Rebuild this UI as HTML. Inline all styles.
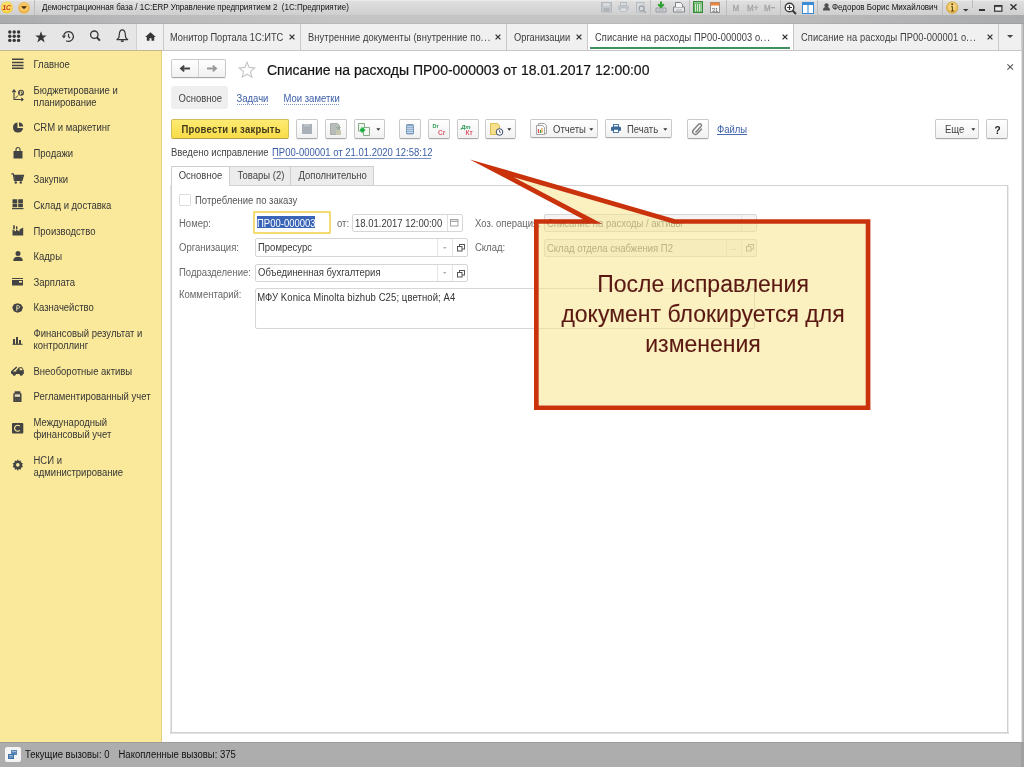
<!DOCTYPE html>
<html><head><meta charset="utf-8">
<style>
*{box-sizing:border-box;margin:0;padding:0}
html,body{width:1024px;height:767px;overflow:hidden;background:#fff;font-family:"Liberation Sans",sans-serif;color:#333}
.a{position:absolute}
svg.a{overflow:visible}
.t{position:absolute;white-space:nowrap;font-family:"Liberation Sans",sans-serif}
</style></head><body><div style="position:absolute;left:0;top:0;width:1024px;height:767px;will-change:transform">
<div class="a" style="left:0px;top:0px;width:1024px;height:15px;background:linear-gradient(to bottom,#f2f2f2 0,#dfdfe0 1px,#cfcfd0 15px)"></div>
<div class="a" style="left:0px;top:15px;width:1024px;height:9px;background:linear-gradient(to right,#aaabad 0,#b8b8ba 12%,#c4c4c4 32%,#c4c4c4 62%,#b9b9ba 80%,#a9aaac 100%)"></div>
<div class="a" style="left:0px;top:23px;width:1024px;height:1px;background:rgba(0,0,0,0.06)"></div>
<svg class="a" style="left:0px;top:1px;" width="14" height="14" viewBox="0 0 14 14"><circle cx="6.9" cy="6.5" r="5.9" fill="#f4cf3c"/><circle cx="6.9" cy="5.8" r="4.6" fill="#fbe36a"/><text x="6.6" y="9" font-size="6.5" font-weight="bold" font-style="italic" text-anchor="middle" fill="#d42a1a" font-family="Liberation Sans">1С</text></svg>
<svg class="a" style="left:18px;top:1px;" width="13" height="14" viewBox="0 0 13 14"><circle cx="6" cy="6.8" r="5.8" fill="#f2b040"/><circle cx="6" cy="6" r="4.6" fill="#f8c868"/><path d="M3 5.3h6l-3 3z" fill="#4a2a08"/></svg>
<div class="a" style="left:34px;top:0px;width:1px;height:15px;background:#bcbcbc"></div>
<div class="t" style="left:42px;top:3px;font-size:8px;line-height:10px;color:#111;transform:scaleY(1.22);transform-origin:0 7px;">Демонстрационная база / 1С:ERP Управление предприятием 2&nbsp;&nbsp;(1С:Предприятие)</div>
<svg class="a" style="left:601px;top:2px;" width="11" height="10" viewBox="0 0 11 10"><rect x="0.5" y="0.5" width="10" height="9.5" fill="#c4c8cc" stroke="#b4b8bc"/><rect x="2.5" y="1" width="6" height="3" fill="#d8dce0"/><rect x="2.5" y="6" width="6" height="3.5" fill="#b0b4b8"/></svg>
<svg class="a" style="left:618px;top:2px;" width="11" height="10" viewBox="0 0 11 10"><rect x="2.5" y="0.5" width="6" height="3" fill="#d8dcdf" stroke="#b8bcc0" stroke-width="1"/><rect x="0" y="3.5" width="11" height="4.5" rx="1" fill="#c0c4c8"/><rect x="2.5" y="6" width="6" height="3.5" fill="#dde0e3" stroke="#b8bcc0" stroke-width=".8"/></svg>
<svg class="a" style="left:636px;top:2px;" width="11" height="11" viewBox="0 0 11 11"><rect x="0.5" y="0.5" width="7.5" height="9.5" fill="#d8dcdf" stroke="#b8bcc0"/><circle cx="5.5" cy="6.5" r="2.5" fill="none" stroke="#a0a6ac" stroke-width="1.3"/><path d="M7.3 8.3l2.5 2.5" stroke="#a0a6ac" stroke-width="1.5"/></svg>
<div class="a" style="left:650px;top:0px;width:1px;height:15px;background:#c0c0c0"></div>
<svg class="a" style="left:655px;top:1px;" width="12" height="12" viewBox="0 0 12 12"><path d="M1 7h10v4H1z" fill="#d0d3d8" stroke="#8a8e96" stroke-width=".8"/><path d="M3 9h6" stroke="#8a8e96" stroke-width=".6"/><path d="M6 0.5v5M3.2 3.2L6 6l2.8-2.8" stroke="#30a030" stroke-width="2" fill="none"/></svg>
<svg class="a" style="left:673px;top:2px;" width="12" height="11" viewBox="0 0 12 11"><path d="M0.5 5h11v5H0.5z" fill="#e8eaec" stroke="#80848a" stroke-width="1"/><path d="M2.5 5V0.5h5l2 2V5" fill="#f4f4f4" stroke="#80848a" stroke-width="1"/><path d="M3 8h6" stroke="#80848a" stroke-width=".6"/></svg>
<div class="a" style="left:689px;top:0px;width:1px;height:15px;background:#c0c0c0"></div>
<svg class="a" style="left:693px;top:1px;" width="10" height="12" viewBox="0 0 10 12"><rect x="0.5" y="0.5" width="9" height="11" fill="#5aae5a" stroke="#3a8a3a"/><path d="M2.5 3v7.5M4.5 3v7.5M6.5 3v7.5M8 3v7.5" stroke="#e0f0e0" stroke-width=".9"/><rect x="1" y="1" width="8" height="1.5" fill="#8ac88a"/></svg>
<svg class="a" style="left:710px;top:1px;" width="10" height="12" viewBox="0 0 10 12"><rect x="0.5" y="1.5" width="9" height="10" fill="#f6f6f6" stroke="#909090"/><rect x="0.5" y="1.5" width="9" height="3" fill="#e8843c"/><text x="5" y="10.5" font-size="6" text-anchor="middle" fill="#505050" font-family="Liberation Sans">31</text></svg>
<div class="a" style="left:726px;top:0px;width:1px;height:15px;background:#bdbdbd"></div>
<div class="t" style="left:732.5px;top:4px;font-size:8px;line-height:10px;color:#a4a4a4;transform:scaleY(1.22);transform-origin:0 7px;-webkit-text-stroke:0.3px #a4a4a4;">M</div>
<div class="t" style="left:747px;top:4px;font-size:8px;line-height:10px;color:#a4a4a4;transform:scaleY(1.22);transform-origin:0 7px;-webkit-text-stroke:0.3px #a4a4a4;">M+</div>
<div class="t" style="left:764px;top:4px;font-size:8px;line-height:10px;color:#a4a4a4;transform:scaleY(1.22);transform-origin:0 7px;-webkit-text-stroke:0.3px #a4a4a4;">M−</div>
<div class="a" style="left:780px;top:0px;width:1px;height:15px;background:#bdbdbd"></div>
<svg class="a" style="left:784px;top:2px;" width="13" height="13" viewBox="0 0 13 13"><circle cx="5.5" cy="5.5" r="4.3" fill="#fff" stroke="#3a3a3a" stroke-width="1.4"/><path d="M3 5.5h5M5.5 3v5" stroke="#3a3a3a" stroke-width="1.2"/><path d="M8.5 8.5l3.5 3.5" stroke="#3a3a3a" stroke-width="2"/></svg>
<svg class="a" style="left:802px;top:2px;" width="12" height="12" viewBox="0 0 12 12"><rect x="0.5" y="0.5" width="11" height="11" fill="#fff" stroke="#3a8ad8"/><rect x="0.5" y="0.5" width="11" height="2.5" fill="#3a8ad8"/><path d="M6 3v8.5" stroke="#3a8ad8"/></svg>
<div class="a" style="left:817px;top:0px;width:1px;height:15px;background:#bdbdbd"></div>
<svg class="a" style="left:823px;top:3px;" width="7" height="8" viewBox="0 0 7 8"><circle cx="3.5" cy="2.3" r="2.1" fill="#505050"/><path d="M0 7.5c0-3 1.4-3.6 3.5-3.6s3.5 .6 3.5 3.6z" fill="#505050"/></svg>
<div class="t" style="left:832px;top:3px;font-size:8px;line-height:10px;color:#111;transform:scaleY(1.22);transform-origin:0 7px;">Федоров Борис Михайлович</div>
<div class="a" style="left:942px;top:0px;width:1px;height:15px;background:#bdbdbd"></div>
<svg class="a" style="left:946px;top:1px;" width="13" height="13" viewBox="0 0 13 13"><circle cx="6.2" cy="6.6" r="5.8" fill="#e6b850" stroke="#d0a040" stroke-width=".6"/><circle cx="6.2" cy="5.8" r="4.3" fill="#f2d27a"/><circle cx="6.2" cy="3.3" r="1" fill="#5a4010"/><path d="M5.2 5.3h1.7v4.2h1v.9H5v-.9h.9V6.2h-.7z" fill="#5a4010"/></svg>
<svg class="a" style="left:963px;top:8.5px;" width="6" height="3" viewBox="0 0 6 3"><path d="M0 0h5.5l-2.75 2.6z" fill="#333"/></svg>
<div class="a" style="left:972px;top:0px;width:1px;height:8px;background:#bdbdbd"></div>
<div class="a" style="left:979px;top:9px;width:5.5px;height:1.6px;background:#333"></div>
<svg class="a" style="left:994px;top:4.5px;" width="9" height="7" viewBox="0 0 9 7"><rect x="0.6" y="0.6" width="7.3" height="5.6" fill="#eee" stroke="#333" stroke-width="1.2"/><path d="M1 1.6h6.6" stroke="#333" stroke-width=".9"/></svg>
<svg class="a" style="left:1010.3px;top:4px;" width="7" height="6" viewBox="0 0 7 6"><path d="M0.5 0.3l6 5.4M6.5 0.3l-6 5.4" stroke="#333" stroke-width="1.5"/></svg>
<div class="a" style="left:0px;top:24px;width:137px;height:27px;background:#e6e6e6"></div>
<div class="a" style="left:137px;top:24px;width:887px;height:27px;background:#f0f0f0"></div>
<div class="a" style="left:0px;top:50px;width:1024px;height:1px;background:#c6c6c6"></div>
<div class="a" style="left:0px;top:50px;width:162px;height:1px;background:#c4b98c"></div>
<div class="a" style="left:136px;top:24px;width:1px;height:26px;background:#d0d0d0"></div>
<div class="a" style="left:163px;top:24px;width:1px;height:26px;background:#c8c8c8"></div>
<svg class="a" style="left:8px;top:30px;" width="13" height="13" viewBox="0 0 13 13"><circle cx="1.80" cy="2.00" r="1.7" fill="#363636"/><circle cx="6.20" cy="2.00" r="1.7" fill="#363636"/><circle cx="10.60" cy="2.00" r="1.7" fill="#363636"/><circle cx="1.80" cy="6.20" r="1.7" fill="#363636"/><circle cx="6.20" cy="6.20" r="1.7" fill="#363636"/><circle cx="10.60" cy="6.20" r="1.7" fill="#363636"/><circle cx="1.80" cy="10.40" r="1.7" fill="#363636"/><circle cx="6.20" cy="10.40" r="1.7" fill="#363636"/><circle cx="10.60" cy="10.40" r="1.7" fill="#363636"/></svg>
<svg class="a" style="left:35px;top:31px;" width="12" height="12" viewBox="0 0 12 12"><path d="M6 0.3l1.5 4.1h4.3l-3.5 2.6 1.4 4.5L6 8.8 2.3 11.5l1.4-4.5L0.2 4.4h4.3z" fill="#363636"/></svg>
<svg class="a" style="left:61px;top:30px;" width="14" height="13" viewBox="0 0 14 13"><path d="M2.77 5.23A4.9 4.9 0 1 1 5.05 10.74" fill="none" stroke="#363636" stroke-width="1.3"/><path d="M0.8 5.6h4.2L2.9 8.4z" fill="#363636"/><path d="M7.5 3.8v3l1.6 1.2" stroke="#363636" stroke-width="1.2" fill="none"/></svg>
<svg class="a" style="left:89px;top:30px;" width="12" height="12" viewBox="0 0 12 12"><circle cx="5.3" cy="4.7" r="3.7" fill="none" stroke="#363636" stroke-width="1.3"/><path d="M7.9 7.4l3 3.2" stroke="#363636" stroke-width="2"/></svg>
<svg class="a" style="left:116px;top:29px;" width="13" height="14" viewBox="0 0 13 14"><path d="M6.3 0.9C4.2 0.9 3.5 3 3.3 5.2L2.9 8.6 0.9 10.6h10.8L9.7 8.6 9.3 5.2C9.1 3 8.4 0.9 6.3 0.9z" fill="none" stroke="#363636" stroke-width="1.2" stroke-linejoin="round"/><path d="M4.9 12.1h2.8" stroke="#363636" stroke-width="1.6"/></svg>
<svg class="a" style="left:144.5px;top:32px;" width="11" height="9" viewBox="0 0 11 9"><path d="M5.5 0.2L0.2 5h1.6v3.8h2.7V6.3h2v2.5h2.7V5h1.6z" fill="#363636"/></svg>
<div class="t" style="left:170px;top:32px;font-size:9.5px;line-height:12px;color:#3c3c3c;transform:scaleY(1.12);transform-origin:0 9px;font-size:9.3px;">Монитор Портала 1С:ИТС</div>
<svg class="a" style="left:289px;top:34px;" width="6" height="6" viewBox="0 0 6 6"><path d="M0.6 0.6l4.8 4.8M5.4 0.6l-4.8 4.8" stroke="#333" stroke-width="1.3"/></svg>
<div class="a" style="left:300px;top:24px;width:1px;height:26px;background:#c8c8c8"></div>
<div class="t" style="left:308px;top:32px;font-size:9.5px;line-height:12px;color:#3c3c3c;transform:scaleY(1.12);transform-origin:0 9px;font-size:9.3px;letter-spacing:0.1px;">Внутренние документы (внутренние по<span style="letter-spacing:0.9px">...</span></div>
<svg class="a" style="left:494.5px;top:34px;" width="6" height="6" viewBox="0 0 6 6"><path d="M0.6 0.6l4.8 4.8M5.4 0.6l-4.8 4.8" stroke="#333" stroke-width="1.3"/></svg>
<div class="a" style="left:506px;top:24px;width:1px;height:26px;background:#c8c8c8"></div>
<div class="t" style="left:514px;top:32px;font-size:9.5px;line-height:12px;color:#3c3c3c;transform:scaleY(1.12);transform-origin:0 9px;font-size:9.3px;">Организации</div>
<svg class="a" style="left:576.3px;top:34px;" width="6" height="6" viewBox="0 0 6 6"><path d="M0.6 0.6l4.8 4.8M5.4 0.6l-4.8 4.8" stroke="#333" stroke-width="1.3"/></svg>
<div class="a" style="left:587px;top:24px;width:1px;height:26px;background:#c8c8c8"></div>
<div class="a" style="left:588px;top:24px;width:205px;height:26px;background:#fff"></div>
<div class="a" style="left:590px;top:47px;width:200px;height:2px;background:#3f9060"></div>
<div class="t" style="left:595px;top:32px;font-size:9.5px;line-height:12px;color:#3c3c3c;transform:scaleY(1.12);transform-origin:0 9px;font-size:9.3px;letter-spacing:0.1px;">Списание на расходы ПР00-000003 о<span style="letter-spacing:0.9px">...</span></div>
<svg class="a" style="left:782px;top:34px;" width="6" height="6" viewBox="0 0 6 6"><path d="M0.6 0.6l4.8 4.8M5.4 0.6l-4.8 4.8" stroke="#333" stroke-width="1.3"/></svg>
<div class="a" style="left:793px;top:24px;width:1px;height:26px;background:#c8c8c8"></div>
<div class="t" style="left:801px;top:32px;font-size:9.5px;line-height:12px;color:#3c3c3c;transform:scaleY(1.12);transform-origin:0 9px;font-size:9.3px;letter-spacing:0.1px;">Списание на расходы ПР00-000001 о<span style="letter-spacing:0.9px">...</span></div>
<svg class="a" style="left:987px;top:34px;" width="6" height="6" viewBox="0 0 6 6"><path d="M0.6 0.6l4.8 4.8M5.4 0.6l-4.8 4.8" stroke="#333" stroke-width="1.3"/></svg>
<div class="a" style="left:998px;top:24px;width:1px;height:26px;background:#c8c8c8"></div>
<svg class="a" style="left:1007px;top:35px;" width="7" height="4" viewBox="0 0 7 4"><path d="M0 0h6.2l-3.1 2.9z" fill="#444"/></svg>
<div class="a" style="left:1021px;top:24px;width:3px;height:27px;background:linear-gradient(to right,#d8d8d8,#a8a8a8)"></div>
<div class="a" style="left:0px;top:51px;width:162px;height:691px;background:#fae99b"></div>
<div class="a" style="left:161px;top:51px;width:1px;height:691px;background:#e3d17e"></div>
<div class="t" style="left:33.5px;top:59px;font-size:9.5px;line-height:12px;color:#363636;transform:scaleY(1.12);transform-origin:0 9px;">Главное</div>
<div class="t" style="left:33.5px;top:85px;font-size:9.5px;line-height:12px;color:#363636;transform:scaleY(1.12);transform-origin:0 9px;">Бюджетирование и</div>
<div class="t" style="left:33.5px;top:97px;font-size:9.5px;line-height:12px;color:#363636;transform:scaleY(1.12);transform-origin:0 9px;">планирование</div>
<div class="t" style="left:33.5px;top:122px;font-size:9.5px;line-height:12px;color:#363636;transform:scaleY(1.12);transform-origin:0 9px;">CRM и маркетинг</div>
<div class="t" style="left:33.5px;top:148px;font-size:9.5px;line-height:12px;color:#363636;transform:scaleY(1.12);transform-origin:0 9px;">Продажи</div>
<div class="t" style="left:33.5px;top:174px;font-size:9.5px;line-height:12px;color:#363636;transform:scaleY(1.12);transform-origin:0 9px;">Закупки</div>
<div class="t" style="left:33.5px;top:200px;font-size:9.5px;line-height:12px;color:#363636;transform:scaleY(1.12);transform-origin:0 9px;">Склад и доставка</div>
<div class="t" style="left:33.5px;top:226px;font-size:9.5px;line-height:12px;color:#363636;transform:scaleY(1.12);transform-origin:0 9px;">Производство</div>
<div class="t" style="left:33.5px;top:251px;font-size:9.5px;line-height:12px;color:#363636;transform:scaleY(1.12);transform-origin:0 9px;">Кадры</div>
<div class="t" style="left:33.5px;top:277px;font-size:9.5px;line-height:12px;color:#363636;transform:scaleY(1.12);transform-origin:0 9px;">Зарплата</div>
<div class="t" style="left:33.5px;top:302px;font-size:9.5px;line-height:12px;color:#363636;transform:scaleY(1.12);transform-origin:0 9px;">Казначейство</div>
<div class="t" style="left:33.5px;top:328px;font-size:9.5px;line-height:12px;color:#363636;transform:scaleY(1.12);transform-origin:0 9px;">Финансовый результат и</div>
<div class="t" style="left:33.5px;top:340px;font-size:9.5px;line-height:12px;color:#363636;transform:scaleY(1.12);transform-origin:0 9px;">контроллинг</div>
<div class="t" style="left:33.5px;top:366px;font-size:9.5px;line-height:12px;color:#363636;transform:scaleY(1.12);transform-origin:0 9px;">Внеоборотные активы</div>
<div class="t" style="left:33.5px;top:391px;font-size:9.5px;line-height:12px;color:#363636;transform:scaleY(1.12);transform-origin:0 9px;">Регламентированный учет</div>
<div class="t" style="left:33.5px;top:417px;font-size:9.5px;line-height:12px;color:#363636;transform:scaleY(1.12);transform-origin:0 9px;">Международный</div>
<div class="t" style="left:33.5px;top:429px;font-size:9.5px;line-height:12px;color:#363636;transform:scaleY(1.12);transform-origin:0 9px;">финансовый учет</div>
<div class="t" style="left:33.5px;top:455px;font-size:9.5px;line-height:12px;color:#363636;transform:scaleY(1.12);transform-origin:0 9px;">НСИ и</div>
<div class="t" style="left:33.5px;top:467px;font-size:9.5px;line-height:12px;color:#363636;transform:scaleY(1.12);transform-origin:0 9px;">администрирование</div>
<svg class="a" style="left:12px;top:58px;" width="12" height="12" viewBox="0 0 12 12"><path d="M0 1.3h11.5M0 4.4h11.5M0 7.5h11.5M0 10.3h11.5" stroke="#434343" stroke-width="1.5"/></svg>
<svg class="a" style="left:12px;top:89px;" width="12" height="12" viewBox="0 0 12 12"><path d="M2 11V1.5M0.3 3.2L2 1l1.7 2.2M2 10.5h9M9.3 8.8l1.8 1.7-1.8 1.7" stroke="#434343" stroke-width="1.1" fill="none"/><circle cx="9" cy="3.8" r="3" fill="#434343"/><path d="M8.3 6V2.3h1.2a1 1 0 0 1 0 2H8" stroke="#fae99b" stroke-width=".9" fill="none"/><path d="M3 9.5l3-3" stroke="#434343" stroke-width="1"/></svg>
<svg class="a" style="left:12px;top:122px;" width="12" height="11" viewBox="0 0 12 11"><path d="M5.5 0.5A5 5 0 1 0 11 6H5.5z" fill="#434343"/><path d="M7 0.2A5 5 0 0 1 11.3 4.6H7z" fill="#434343"/></svg>
<svg class="a" style="left:13px;top:147px;" width="10" height="12" viewBox="0 0 10 12"><path d="M0.5 4h9v7.5h-9z" fill="#434343"/><path d="M3 4.5V2.5a2 2 0 0 1 4 0v2" stroke="#434343" stroke-width="1.1" fill="none"/></svg>
<svg class="a" style="left:11px;top:173px;" width="13" height="11" viewBox="0 0 13 11"><path d="M0.3 0.8h2l1.2 6.5h7.5l1.4-5H3" stroke="#434343" stroke-width="1.3" fill="none"/><path d="M3 2.3h9l-1.4 5H4z" fill="#434343"/><circle cx="4.8" cy="9.5" r="1.2" fill="#434343"/><circle cx="9.8" cy="9.5" r="1.2" fill="#434343"/></svg>
<svg class="a" style="left:12px;top:199px;" width="12" height="11" viewBox="0 0 12 11"><path d="M0.5 0.3h4.7v3.6H0.5zM6.2 0.3h4.7v3.6H6.2zM0.5 4.6h4.7v3.6H0.5zM6.2 4.6h4.7v3.6H6.2z" fill="#434343"/><path d="M0 9.6h11.5" stroke="#434343" stroke-width="1.2"/></svg>
<svg class="a" style="left:12px;top:225px;" width="12" height="11" viewBox="0 0 12 11"><path d="M0.5 10.5V4.5l3.5 2V4.5l3.5 2V4.5l3.7 -2V10.5z" fill="#434343"/><rect x="1.2" y="0.3" width="1.6" height="4" fill="#434343"/><rect x="4" y="1.3" width="1.4" height="3" fill="#434343"/></svg>
<svg class="a" style="left:13px;top:251px;" width="10" height="10" viewBox="0 0 10 10"><circle cx="5" cy="2.6" r="2.5" fill="#434343"/><path d="M0.3 10c0-3 1.5-4.3 4.7-4.3s4.7 1.3 4.7 4.3z" fill="#434343"/></svg>
<svg class="a" style="left:12px;top:278px;" width="12" height="8" viewBox="0 0 12 8"><rect x="0" y="0" width="11" height="1" fill="#434343"/><rect x="0" y="2" width="11" height="5.5" fill="#434343"/><rect x="7" y="3" width="3" height="1.6" fill="#fae99b"/></svg>
<svg class="a" style="left:12px;top:303px;" width="12" height="10" viewBox="0 0 12 10"><path d="M5.5 0.2L9 1.2 11 4.5 9.5 8.2 5.5 9.8 1.8 8.2 0.2 4.5 2 1.2z" fill="#434343"/><path d="M4.8 8V2.6h1.4a1.3 1.3 0 0 1 0 2.7H4.2" stroke="#d8cfa0" stroke-width="1" fill="none"/></svg>
<svg class="a" style="left:12px;top:335px;" width="11" height="10" viewBox="0 0 11 10"><path d="M2 4v5M5 2v7M8 5v4" stroke="#434343" stroke-width="2"/><path d="M0.5 9.3h10" stroke="#434343" stroke-width="1.1"/></svg>
<svg class="a" style="left:11px;top:366px;" width="13" height="10" viewBox="0 0 13 10"><path d="M5.5 4.2L8 1.3h3l1.8 3V8H4.5z" fill="#434343"/><path d="M8.6 2.2h2l1.2 2H8.6z" fill="#fae99b"/><path d="M0.8 7.5V5.5l5-4.5" stroke="#434343" stroke-width="1.6" fill="none"/><path d="M0.5 5.5h5V8h-5z" fill="#434343"/><circle cx="3.2" cy="8.3" r="1.5" fill="#434343"/><circle cx="10.2" cy="8.3" r="1.5" fill="#434343"/></svg>
<svg class="a" style="left:13px;top:391px;" width="9" height="12" viewBox="0 0 9 12"><rect x="1.5" y="0.3" width="6" height="2.2" rx=".6" fill="#434343"/><rect x="0.3" y="2.2" width="8.2" height="8.8" rx=".6" fill="#434343"/><rect x="1.8" y="3.4" width="5.2" height="2.4" fill="#e8e0c0"/><path d="M2.5 7v3.5M4.4 7v3.5M6.3 7v3.5" stroke="#6a6650" stroke-width=".6"/></svg>
<svg class="a" style="left:12px;top:423px;" width="12" height="11" viewBox="0 0 12 11"><rect x="0" y="0" width="11.3" height="10.5" rx="1" fill="#434343"/><path d="M7.8 3.2A3 3 0 1 0 7.8 7.3" stroke="#fae99b" stroke-width="1.2" fill="none"/></svg>
<svg class="a" style="left:12px;top:459px;" width="12" height="12" viewBox="0 0 12 12"><path d="M5.8 0.3l1 1.8 1.9-.6.3 2 1.9.8-.9 1.8.9 1.8-1.9.8-.3 2-1.9-.6-1 1.8-1-1.8-1.9.6-.3-2-1.9-.8.9-1.8-.9-1.8 1.9-.8.3-2 1.9.6z" fill="#434343"/><circle cx="5.8" cy="5.9" r="1.8" fill="#fae99b"/></svg>
<div class="a" style="left:1021px;top:51px;width:3px;height:691px;background:linear-gradient(to right,#f0f0f0,#bcbcbc 50%,#a8a8a8)"></div>
<div class="a" style="left:171px;top:59px;width:55px;height:19px;background:linear-gradient(#fff,#f1f1f1);border:1px solid #c9c9c9;border-bottom-color:#a9a9a9;border-radius:2px;box-shadow:0 1px 0 rgba(0,0,0,0.06);"></div>
<div class="a" style="left:198px;top:60px;width:1px;height:17px;background:#d4d4d4"></div>
<svg class="a" style="left:179px;top:64px;" width="12" height="9" viewBox="0 0 12 9"><path d="M11 4.5H3M5.2 1.6L2 4.5 5.2 7.4" stroke="#444" stroke-width="1.9" fill="none"/></svg>
<svg class="a" style="left:206px;top:64px;" width="12" height="9" viewBox="0 0 12 9"><path d="M1 4.5h8M6.8 1.6L10 4.5 6.8 7.4" stroke="#999" stroke-width="1.9" fill="none"/></svg>
<svg class="a" style="left:238px;top:61px;" width="18" height="17" viewBox="0 0 18 17"><path d="M9 1.2l2.2 5.2 5.6.5-4.3 3.7 1.3 5.5L9 13.2l-4.8 2.9 1.3-5.5L1.2 6.9l5.6-.5z" fill="none" stroke="#c4c4c4" stroke-width="1.1"/></svg>
<div class="t" style="left:267px;top:62px;font-size:14px;line-height:16px;color:#141414;-webkit-text-stroke:0.2px #141414;">Списание на расходы ПР00-000003 от 18.01.2017 12:00:00</div>
<svg class="a" style="left:1007px;top:64px;" width="7" height="6" viewBox="0 0 7 6"><path d="M0.4 0.3l5.6 5.4M6 0.3L0.4 5.7" stroke="#555" stroke-width="1.1"/></svg>
<div class="a" style="left:171px;top:86px;width:57px;height:23px;background:#efefef;border-radius:3px"></div>
<div class="t" style="left:178.5px;top:92.5px;font-size:9.5px;line-height:12px;color:#444;transform:scaleY(1.12);transform-origin:0 9px;">Основное</div>
<div class="t" style="left:236.5px;top:92.5px;font-size:9.5px;line-height:12px;color:#3a5ea8;transform:scaleY(1.12);transform-origin:0 9px;">Задачи</div>
<div class="a" style="left:237px;top:104px;width:31px;height:1px;border-top:1px dotted #7d95c8"></div>
<div class="t" style="left:283.5px;top:92.5px;font-size:9.5px;line-height:12px;color:#3a5ea8;transform:scaleY(1.12);transform-origin:0 9px;">Мои заметки</div>
<div class="a" style="left:284px;top:104px;width:55px;height:1px;border-top:1px dotted #7d95c8"></div>
<div class="a" style="left:171px;top:119px;width:118px;height:20px;background:linear-gradient(#fdeb72,#f8dc48);border:1px solid #d2bd5a;border-bottom-color:#b8a448;border-radius:2px"></div>
<div class="t" style="left:181.5px;top:124px;font-size:9.5px;line-height:12px;color:#40391e;font-weight:bold;transform:scaleY(1.12);transform-origin:0 9px;letter-spacing:0.22px;">Провести и закрыть</div>
<div class="a" style="left:296px;top:119px;width:22px;height:20px;background:linear-gradient(#fff,#f1f1f1);border:1px solid #c9c9c9;border-bottom-color:#a9a9a9;border-radius:2px;box-shadow:0 1px 0 rgba(0,0,0,0.06);"></div>
<svg class="a" style="left:302px;top:124px;" width="10" height="10" viewBox="0 0 10 10"><rect x="0" y="0" width="10" height="10" fill="#aab0b8"/><rect x="2" y="0" width="6" height="2.5" fill="#bcc2c8"/></svg>
<div class="a" style="left:325px;top:119px;width:22px;height:20px;background:linear-gradient(#fff,#f1f1f1);border:1px solid #c9c9c9;border-bottom-color:#a9a9a9;border-radius:2px;box-shadow:0 1px 0 rgba(0,0,0,0.06);"></div>
<svg class="a" style="left:330px;top:123px;" width="12" height="12" viewBox="0 0 12 12"><path d="M0.5 0.5h7l2 2v9h-9z" fill="#b9bdb9" stroke="#9ea29e" stroke-width=".8"/><path d="M6 4h5l-2.5 3z" fill="#9aa89a"/><rect x="6" y="7" width="5" height="5" fill="#c8c8b0"/></svg>
<div class="a" style="left:354px;top:119px;width:31px;height:20px;background:linear-gradient(#fff,#f1f1f1);border:1px solid #c9c9c9;border-bottom-color:#a9a9a9;border-radius:2px;box-shadow:0 1px 0 rgba(0,0,0,0.06);"></div>
<svg class="a" style="left:358px;top:123px;" width="13" height="13" viewBox="0 0 13 13"><path d="M0.5 0.5h6v7.5h-6z" fill="#eef4ee" stroke="#7aa07a" stroke-width=".9"/><path d="M5.5 4.5h6v8h-6z" fill="#f4f8f4" stroke="#7aa07a" stroke-width=".9"/><path d="M3.5 3.8l4.2 3.2-4.2 3.2z" fill="#18b040"/><rect x="2.2" y="5.6" width="2.5" height="2.8" fill="#18b040"/></svg>
<svg class="a" style="left:376px;top:128px;" width="5" height="3" viewBox="0 0 5 3"><path d="M0.3 0.3h4l-2 2.4z" fill="#333"/></svg>
<div class="a" style="left:399px;top:119px;width:22px;height:20px;background:linear-gradient(#fff,#f1f1f1);border:1px solid #c9c9c9;border-bottom-color:#a9a9a9;border-radius:2px;box-shadow:0 1px 0 rgba(0,0,0,0.06);"></div>
<svg class="a" style="left:406px;top:124px;" width="8" height="10" viewBox="0 0 8 10"><rect x="0.5" y="0.5" width="7" height="9.5" rx=".8" fill="#88a8cc" stroke="#6a8ab0" stroke-width=".8"/><path d="M1 2.7h6M1 4.7h6M1 6.7h6M1 8.5h6" stroke="#dde8f4" stroke-width=".8"/></svg>
<div class="a" style="left:428px;top:119px;width:22px;height:20px;background:linear-gradient(#fff,#f1f1f1);border:1px solid #c9c9c9;border-bottom-color:#a9a9a9;border-radius:2px;box-shadow:0 1px 0 rgba(0,0,0,0.06);"></div>
<svg class="a" style="left:432px;top:123px;" width="14" height="13" viewBox="0 0 14 13"><text x="0.5" y="5" font-size="5.5" font-weight="bold" fill="#2a9a55" font-family="Liberation Sans">Dr</text><text x="6" y="11.5" font-size="6.5" font-weight="bold" fill="#e05a6a" font-family="Liberation Sans">Cr</text></svg>
<div class="a" style="left:457px;top:119px;width:22px;height:20px;background:linear-gradient(#fff,#f1f1f1);border:1px solid #c9c9c9;border-bottom-color:#a9a9a9;border-radius:2px;box-shadow:0 1px 0 rgba(0,0,0,0.06);"></div>
<svg class="a" style="left:461px;top:123px;" width="14" height="13" viewBox="0 0 14 13"><text x="0" y="5.5" font-size="6" font-weight="bold" font-style="italic" fill="#2a9a55" font-family="Liberation Sans">Дт</text><text x="4.5" y="11.5" font-size="6.5" font-weight="bold" fill="#e05a6a" font-family="Liberation Sans">Кт</text></svg>
<div class="a" style="left:485px;top:119px;width:31px;height:20px;background:linear-gradient(#fff,#f1f1f1);border:1px solid #c9c9c9;border-bottom-color:#a9a9a9;border-radius:2px;box-shadow:0 1px 0 rgba(0,0,0,0.06);"></div>
<svg class="a" style="left:490px;top:123px;" width="14" height="13" viewBox="0 0 14 13"><path d="M0.5 0.5h7l2 2v9h-9z" fill="#f6e08a" stroke="#d8b848" stroke-width=".9"/><circle cx="9.5" cy="9" r="3.3" fill="#fff" stroke="#3a4a6a" stroke-width="1"/><path d="M9.5 7v2.2h1.5" stroke="#3a4a6a" stroke-width=".8" fill="none"/></svg>
<svg class="a" style="left:507px;top:128px;" width="5" height="3" viewBox="0 0 5 3"><path d="M0.3 0.3h4l-2 2.4z" fill="#333"/></svg>
<div class="a" style="left:530px;top:119px;width:68px;height:19px;background:linear-gradient(#fff,#f1f1f1);border:1px solid #c9c9c9;border-bottom-color:#a9a9a9;border-radius:2px;box-shadow:0 1px 0 rgba(0,0,0,0.06);"></div>
<svg class="a" style="left:536px;top:123px;" width="12" height="12" viewBox="0 0 12 12"><path d="M2.5 0.5h6l2 2v8h-8z" fill="#f4f4f4" stroke="#909090" stroke-width=".8"/><path d="M0.5 2.5h6l2 2v7h-8z" fill="#fafafa" stroke="#909090" stroke-width=".8"/><path d="M2.5 6v4" stroke="#e05050" stroke-width="1.2"/><path d="M4.5 7v3" stroke="#40a050" stroke-width="1.2"/><path d="M6 5v5" stroke="#e0a040" stroke-width="1.2"/></svg>
<div class="t" style="left:553px;top:124px;font-size:9.5px;line-height:12px;color:#444;transform:scaleY(1.12);transform-origin:0 9px;">Отчеты</div>
<svg class="a" style="left:589px;top:128px;" width="5" height="3" viewBox="0 0 5 3"><path d="M0.3 0.3h4l-2 2.4z" fill="#333"/></svg>
<div class="a" style="left:605px;top:119px;width:67px;height:19px;background:linear-gradient(#fff,#f1f1f1);border:1px solid #c9c9c9;border-bottom-color:#a9a9a9;border-radius:2px;box-shadow:0 1px 0 rgba(0,0,0,0.06);"></div>
<svg class="a" style="left:611px;top:124px;" width="10" height="9" viewBox="0 0 10 9"><rect x="2.5" y="0.5" width="5" height="2.5" fill="#fff" stroke="#3a6a9a" stroke-width=".9"/><rect x="0" y="2.8" width="10" height="4.2" rx="1.2" fill="#3a6a9a"/><rect x="2.5" y="5.2" width="5" height="3.3" fill="#fff" stroke="#3a6a9a" stroke-width=".9"/></svg>
<div class="t" style="left:627px;top:124px;font-size:9.5px;line-height:12px;color:#444;transform:scaleY(1.12);transform-origin:0 9px;">Печать</div>
<svg class="a" style="left:663px;top:128px;" width="5" height="3" viewBox="0 0 5 3"><path d="M0.3 0.3h4l-2 2.4z" fill="#333"/></svg>
<div class="a" style="left:687px;top:119px;width:22px;height:20px;background:linear-gradient(#fff,#f1f1f1);border:1px solid #c9c9c9;border-bottom-color:#a9a9a9;border-radius:2px;box-shadow:0 1px 0 rgba(0,0,0,0.06);"></div>
<svg class="a" style="left:692px;top:123px;" width="12" height="12" viewBox="0 0 12 12"><path d="M3.5 9.5l5.5-6a1.6 1.6 0 0 0-2.3-2.3L1.3 7a2.7 2.7 0 0 0 3.8 3.8l4.8-5" stroke="#7a7a7a" stroke-width="1.3" fill="none"/></svg>
<div class="t" style="left:717px;top:124px;font-size:9.5px;line-height:12px;color:#3a5ea8;transform:scaleY(1.12);transform-origin:0 9px;">Файлы</div>
<div class="a" style="left:717px;top:134px;width:30px;height:1px;background:#4a6ab4"></div>
<div class="a" style="left:935px;top:119px;width:44px;height:20px;background:linear-gradient(#fff,#f1f1f1);border:1px solid #c9c9c9;border-bottom-color:#a9a9a9;border-radius:2px;box-shadow:0 1px 0 rgba(0,0,0,0.06);"></div>
<div class="t" style="left:945px;top:124px;font-size:9.5px;line-height:12px;color:#444;transform:scaleY(1.12);transform-origin:0 9px;">Еще</div>
<svg class="a" style="left:970.5px;top:128px;" width="5" height="3" viewBox="0 0 5 3"><path d="M0.3 0.3h4l-2 2.4z" fill="#333"/></svg>
<div class="a" style="left:986px;top:119px;width:22px;height:20px;background:linear-gradient(#fff,#f1f1f1);border:1px solid #c9c9c9;border-bottom-color:#a9a9a9;border-radius:2px;box-shadow:0 1px 0 rgba(0,0,0,0.06);"></div>
<div class="t" style="left:994.5px;top:125px;font-size:10px;line-height:12px;color:#222;font-weight:bold;">?</div>
<div class="t" style="left:171px;top:147px;font-size:9.5px;line-height:12px;color:#444;transform:scaleY(1.12);transform-origin:0 9px;">Введено исправление</div>
<div class="t" style="left:272px;top:147px;font-size:9.5px;line-height:12px;color:#3a5ea8;transform:scaleY(1.12);transform-origin:0 9px;">ПР00-000001 от 21.01.2020 12:58:12</div>
<div class="a" style="left:273px;top:158px;width:158px;height:1px;background:#7890c4"></div>
<div class="a" style="left:171px;top:166px;width:59px;height:20px;background:#fff;border:1px solid #cfcfcf;border-bottom:none"></div>
<div class="a" style="left:230px;top:166px;width:61px;height:20px;background:#ececec;border:1px solid #cfcfcf;border-left:none;border-bottom:none"></div>
<div class="a" style="left:291px;top:166px;width:83px;height:20px;background:#ececec;border:1px solid #cfcfcf;border-left:none;border-bottom:none"></div>
<div class="t" style="left:178.7px;top:170px;font-size:9.5px;line-height:12px;color:#444;transform:scaleY(1.12);transform-origin:0 9px;">Основное</div>
<div class="t" style="left:237.5px;top:170px;font-size:9.5px;line-height:12px;color:#444;transform:scaleY(1.12);transform-origin:0 9px;">Товары (2)</div>
<div class="t" style="left:298.5px;top:170px;font-size:9.5px;line-height:12px;color:#444;transform:scaleY(1.12);transform-origin:0 9px;">Дополнительно</div>
<div class="a" style="left:230px;top:185px;width:778px;height:1px;background:#d2d2d2"></div>
<div class="a" style="left:170px;top:185px;width:1px;height:549px;background:#e4e4e4"></div>
<div class="a" style="left:171px;top:185px;width:1px;height:549px;background:#d0d0d0"></div>
<div class="a" style="left:1007px;top:185px;width:1px;height:549px;background:#d0d0d0"></div>
<div class="a" style="left:1008px;top:185px;width:1px;height:549px;background:#ececec"></div>
<div class="a" style="left:170px;top:732px;width:839px;height:1px;background:#d0d0d0"></div>
<div class="a" style="left:170px;top:733px;width:839px;height:1px;background:#e2e2e2"></div>
<div class="a" style="left:179px;top:194px;width:12px;height:12px;background:#fff;border:1px solid #dcdcdc;border-radius:1px"></div>
<div class="t" style="left:195px;top:195px;font-size:9.5px;line-height:12px;color:#555;transform:scaleY(1.12);transform-origin:0 9px;">Потребление по заказу</div>
<div class="t" style="left:179px;top:218px;font-size:9.5px;line-height:12px;color:#666;transform:scaleY(1.12);transform-origin:0 9px;">Номер:</div>
<div class="a" style="left:253px;top:211px;width:78px;height:23px;background:#fff;border:2px solid #f4dc72;border-radius:1px"></div>
<div class="a" style="left:257px;top:216px;width:58px;height:12px;background:#3a64b8"></div>
<div class="t" style="left:257px;top:218px;font-size:9.5px;line-height:12px;color:#fff;transform:scaleY(1.12);transform-origin:0 9px;">ПР00-000003</div>
<div class="t" style="left:337px;top:218px;font-size:9.5px;line-height:12px;color:#666;transform:scaleY(1.12);transform-origin:0 9px;">от:</div>
<div class="a" style="left:352px;top:214px;width:111px;height:18px;background:#fff;border:1px solid #d6d6d6;border-radius:2px"></div>
<div class="a" style="left:447px;top:215px;width:1px;height:16px;background:#e0e0e0"></div>
<div class="t" style="left:355px;top:218px;font-size:9.5px;line-height:12px;color:#3a3a3a;transform:scaleY(1.12);transform-origin:0 9px;">18.01.2017 12:00:00</div>
<svg class="a" style="left:450px;top:219px;" width="9" height="8" viewBox="0 0 9 8"><rect x="0.5" y="0.5" width="7.5" height="6.5" fill="none" stroke="#9a9a9a" stroke-width=".9"/><path d="M0.5 2.3h7.5" stroke="#9a9a9a" stroke-width="1.1"/></svg>
<div class="t" style="left:179px;top:242px;font-size:9.5px;line-height:12px;color:#666;transform:scaleY(1.12);transform-origin:0 9px;">Организация:</div>
<div class="a" style="left:255px;top:238px;width:213px;height:19px;background:#fff;border:1px solid #d6d6d6;border-radius:2px"></div>
<div class="a" style="left:437px;top:239px;width:1px;height:17px;background:#e4e4e4"></div>
<div class="a" style="left:452px;top:239px;width:1px;height:17px;background:#e4e4e4"></div>
<svg class="a" style="left:442.5px;top:246.5px;" width="4" height="2" viewBox="0 0 4 2"><path d="M0 0h3.5l-1.75 2z" fill="#aaa"/></svg>
<svg class="a" style="left:456.5px;top:244px;" width="8" height="8" viewBox="0 0 8 8"><rect x="2.5" y="0.5" width="5" height="4.5" fill="none" stroke="#555" stroke-width="1"/><rect x="0.5" y="2.5" width="4.5" height="4.5" fill="#fff" stroke="#555" stroke-width="1"/></svg>
<div class="t" style="left:258px;top:242px;font-size:9.5px;line-height:12px;color:#3a3a3a;transform:scaleY(1.12);transform-origin:0 9px;">Промресурс</div>
<div class="t" style="left:179px;top:267px;font-size:9.5px;line-height:12px;color:#666;transform:scaleY(1.12);transform-origin:0 9px;">Подразделение:</div>
<div class="a" style="left:255px;top:264px;width:213px;height:18px;background:#fff;border:1px solid #d6d6d6;border-radius:2px"></div>
<div class="a" style="left:437px;top:265px;width:1px;height:16px;background:#e4e4e4"></div>
<div class="a" style="left:452px;top:265px;width:1px;height:16px;background:#e4e4e4"></div>
<svg class="a" style="left:442.5px;top:272px;" width="4" height="2" viewBox="0 0 4 2"><path d="M0 0h3.5l-1.75 2z" fill="#aaa"/></svg>
<svg class="a" style="left:456.5px;top:269.5px;" width="8" height="8" viewBox="0 0 8 8"><rect x="2.5" y="0.5" width="5" height="4.5" fill="none" stroke="#555" stroke-width="1"/><rect x="0.5" y="2.5" width="4.5" height="4.5" fill="#fff" stroke="#555" stroke-width="1"/></svg>
<div class="t" style="left:258px;top:267px;font-size:9.5px;line-height:12px;color:#3a3a3a;transform:scaleY(1.12);transform-origin:0 9px;">Объединенная бухгалтерия</div>
<div class="t" style="left:179px;top:289px;font-size:9.5px;line-height:12px;color:#666;transform:scaleY(1.12);transform-origin:0 9px;">Комментарий:</div>
<div class="a" style="left:255px;top:288px;width:500px;height:41px;background:#fff;border:1px solid #d6d6d6;border-radius:2px"></div>
<div class="t" style="left:257.2px;top:292px;font-size:9.5px;line-height:12px;color:#333;transform:scaleY(1.12);transform-origin:0 9px;letter-spacing:0.1px;">МФУ Konica Minolta bizhub C25; цветной; A4</div>
<div class="t" style="left:475px;top:218px;font-size:9.5px;line-height:12px;color:#666;transform:scaleY(1.12);transform-origin:0 9px;">Хоз. операция:</div>
<div class="t" style="left:475px;top:242px;font-size:9.5px;line-height:12px;color:#666;transform:scaleY(1.12);transform-origin:0 9px;">Склад:</div>
<div class="a" style="left:544px;top:214px;width:213px;height:18px;background:#f4f4f4;border:1px solid #d6d6d6;border-radius:2px"></div>
<div class="a" style="left:741px;top:215px;width:1px;height:16px;background:#e4e4e4"></div>
<div class="t" style="left:547px;top:218px;font-size:9.5px;line-height:12px;color:#707070;transform:scaleY(1.12);transform-origin:0 9px;">Списание на расходы / активы</div>
<div class="a" style="left:544px;top:239px;width:213px;height:18px;background:#f4f4f4;border:1px solid #d6d6d6;border-radius:2px"></div>
<div class="a" style="left:726px;top:240px;width:1px;height:16px;background:#e4e4e4"></div>
<div class="a" style="left:741px;top:240px;width:1px;height:16px;background:#e4e4e4"></div>
<div class="t" style="left:547px;top:243px;font-size:9.5px;line-height:12px;color:#707070;transform:scaleY(1.12);transform-origin:0 9px;">Склад отдела снабжения П2</div>
<div class="t" style="left:730px;top:243px;font-size:8px;line-height:10px;color:#aaa;transform:scaleY(1.22);transform-origin:0 7px;">...</div>
<svg class="a" style="left:745.5px;top:244px;" width="8" height="8" viewBox="0 0 8 8"><rect x="2.5" y="0.5" width="5" height="4.5" fill="none" stroke="#999" stroke-width="1"/><rect x="0.5" y="2.5" width="4.5" height="4.5" fill="#f4f4f4" stroke="#999" stroke-width="1"/></svg>
<svg class="a" style="left:0px;top:0px;" width="1024" height="767" viewBox="0 0 1024 767"><path d="M538.7 223.8H602.1L513.8 177.2L673.9 223.8H865.7V405.4H538.7Z" fill="rgba(246,228,140,0.55)"/><path d="M534 219.2H583.1L469.8 159.4L675.3 219.2H870.4V410.1H534ZM538.7 223.8H602.1L513.8 177.2L673.9 223.8H865.7V405.4H538.7Z" fill="#c9320a" fill-rule="evenodd"/></svg>
<div class="t" style="left:503px;top:269px;width:400px;text-align:center;font-size:23px;line-height:30px;color:#5a1812;-webkit-text-stroke:0.1px #5a1812">После исправления</div>
<div class="t" style="left:503px;top:299px;width:400px;text-align:center;font-size:23px;line-height:30px;color:#5a1812;-webkit-text-stroke:0.1px #5a1812">документ блокируется для</div>
<div class="t" style="left:503px;top:329px;width:400px;text-align:center;font-size:23px;line-height:30px;color:#5a1812;-webkit-text-stroke:0.1px #5a1812">изменения</div>
<div class="a" style="left:0px;top:742px;width:1024px;height:25px;background:#adadad"></div>
<div class="a" style="left:0px;top:742px;width:1024px;height:1px;background:#9c9c9c"></div>
<div class="a" style="left:1021px;top:742px;width:3px;height:25px;background:#a0a0a0"></div>
<div class="a" style="left:5px;top:747px;width:16px;height:15px;background:#f4f4f4;border-radius:2px"></div>
<svg class="a" style="left:7px;top:749px;" width="12" height="11" viewBox="0 0 12 11"><path d="M4 1h6v5H4z" fill="#5a86b8"/><path d="M1 5h6v5H1z" fill="#3d6fa8"/><path d="M2 6.5h4M2 8h4M5 2.5h4" stroke="#cfe0f0" stroke-width=".6"/></svg>
<div class="t" style="left:25px;top:749px;font-size:9.5px;line-height:12px;color:#111;transform:scaleY(1.12);transform-origin:0 9px;">Текущие вызовы: 0</div>
<div class="t" style="left:118.5px;top:749px;font-size:9.5px;line-height:12px;color:#111;transform:scaleY(1.12);transform-origin:0 9px;">Накопленные вызовы: 375</div>
</div></body></html>
